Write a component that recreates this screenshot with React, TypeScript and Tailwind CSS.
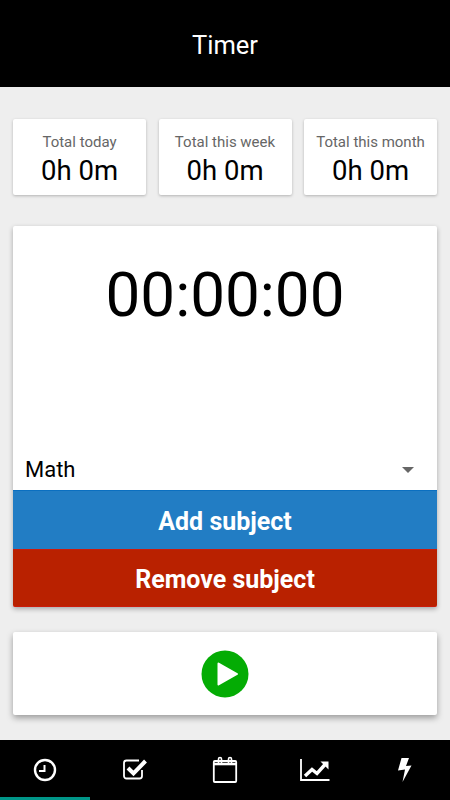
// Timer screen with totals, stopwatch card and bottom tab bar.
const font = "font-['Roboto',sans-serif]"

function StatCard({ label }: { label: string }) {
  return (
    <div className="flex h-[76px] flex-1 flex-col items-center rounded-[2px] bg-white pt-[13px] shadow-[0_1px_3px_rgba(0,0,0,0.25)]">
      <span className="text-[15px] leading-[20px] text-[#666666]">{label}</span>
      <span className="mt-[3px] text-[27.500px] leading-[32px] text-black">0h 0m</span>
    </div>
  )
}

function ClockIcon() {
  return (
    <svg width="24" height="24" viewBox="0 0 24 24" fill="none" stroke="white">
      <circle cx="12" cy="12" r="10" strokeWidth="2.400" />
      <path d="M11.500 7V13H6" strokeWidth="2" />
    </svg>
  )
}

function CheckIcon() {
  return (
    <svg width="26" height="24" viewBox="0 0 26 24" fill="none" stroke="white">
      <path d="M20 13V19a2.500 2.500 0 0 1-2.500 2.500H4.500A2.500 2.500 0 0 1 2 19V6a2.500 2.500 0 0 1 2.500-2.500H17" strokeWidth="1.800" />
      <path d="M6 11l5.500 5.500L23.500 4" strokeWidth="4" />
    </svg>
  )
}

function CalendarIcon() {
  return (
    <svg width="26" height="28" viewBox="0 0 26 28" fill="none" stroke="white">
      <rect x="1.800" y="5" width="22.400" height="21" rx="1" strokeWidth="1.800" />
      <path d="M2 8h22" strokeWidth="2.600" />
      <path d="M6.500 7V3a1.500 1.500 0 0 1 3 0V7M16.500 7V3a1.500 1.500 0 0 1 3 0V7" strokeWidth="1.600" />
    </svg>
  )
}

function ChartIcon() {
  return (
    <svg width="30" height="24" viewBox="0 0 30 24" fill="none" stroke="white">
      <path d="M1 1v21h28.500" strokeWidth="1.800" />
      <path d="M5 18l7-6.500 5 4 8.500-9.500" strokeWidth="3.400" />
      <path d="M20.500 3.500H28.500V11.500z" fill="white" stroke="none" />
    </svg>
  )
}

function BoltIcon() {
  return (
    <svg width="14" height="24" viewBox="0 0 14 24" fill="white">
      <path d="M3.500 0h7.500L8 8l5.500-.5L4.500 24l2.500-12.500-7 1z" />
    </svg>
  )
}

export default function App() {
  return (
    <div className={`${font} flex h-[800px] w-[450px] flex-col bg-[#eeeeee]`}>
      <header className="flex h-[87px] items-center justify-center bg-black pt-[4px]">
        <h1 className="text-[25.500px] font-normal text-white">Timer</h1>
      </header>

      <main className="flex flex-1 flex-col px-[13px] pt-[32px]">
        <div className="flex gap-[12.500px]">
          <StatCard label="Total today" />
          <StatCard label="Total this week" />
          <StatCard label="Total this month" />
        </div>

        <section className="mt-[31px] flex h-[381px] flex-col rounded-[2px] bg-white shadow-[0_2px_5px_rgba(0,0,0,0.3)]">
          <div className="flex flex-1 justify-center pt-[29px]">
            <span className="text-[62px] leading-[80px] text-black">00:00:00</span>
          </div>
          <div className="flex h-[41px] items-center justify-between pl-[12px] pr-[23px]">
            <span className="text-[22px] text-black">Math</span>
            <span className="h-0 w-0 border-x-[6px] border-t-[6px] border-x-transparent border-t-[#666666]" />
          </div>
          <button className="h-[59px] border-t border-[#0b6fc0] bg-[#227dc4] pt-[4px] text-[25px] font-bold text-white">
            Add subject
          </button>
          <button className="h-[58px] rounded-b-[2px] border-y border-[#cc1a0a] bg-[#b92100] pt-[4px] text-[25px] font-bold text-white">
            Remove subject
          </button>
        </section>

        <section className="mt-[25px] flex h-[83px] items-center justify-center rounded-[2px] bg-white shadow-[0_3px_6px_rgba(0,0,0,0.35)]">
          <svg width="48" height="48" viewBox="0 0 48 48">
            <circle cx="24" cy="24" r="23.500" fill="#04ac04" />
            <path d="M17.500 13.500L36 24 17.500 34.500z" fill="white" stroke="white" strokeWidth="2" strokeLinejoin="round" />
          </svg>
        </section>
      </main>

      <nav className="relative flex h-[60px] bg-black">
        <div className="flex w-[90px] items-center justify-center"><ClockIcon /></div>
        <div className="flex w-[90px] items-center justify-center pb-[2px]"><CheckIcon /></div>
        <div className="flex w-[90px] items-center justify-center"><CalendarIcon /></div>
        <div className="flex w-[90px] items-center justify-center"><ChartIcon /></div>
        <div className="flex w-[90px] items-center justify-center"><BoltIcon /></div>
        <div className="absolute bottom-0 left-0 h-[3px] w-[90px] bg-[#009688]" />
      </nav>
    </div>
  )
}
